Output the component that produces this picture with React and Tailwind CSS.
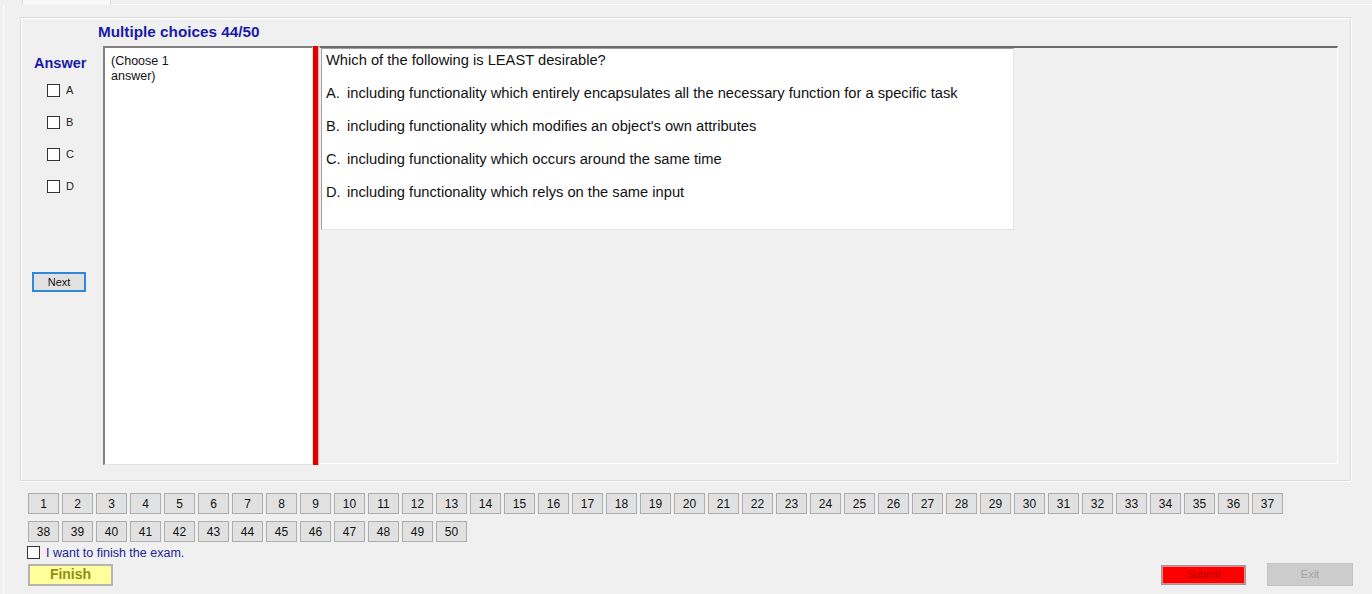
import React from 'react';

const options = [
  { key: 'A', text: 'including functionality which entirely encapsulates all the necessary function for a specific task' },
  { key: 'B', text: "including functionality which modifies an object's own attributes" },
  { key: 'C', text: 'including functionality which occurs around the same time' },
  { key: 'D', text: 'including functionality which relys on the same input' },
];

const numbers = Array.from({ length: 50 }, (_, i) => i + 1);

function Box() {
  return <span className="block w-[13px] h-[13px] bg-white border border-[#333333]" />;
}

function NumButton({ n }) {
  return (
    <div className="w-[31px] h-[21px] flex items-center justify-center bg-[#e1e1e1] border border-[#adadad] text-[12px] text-[#111]">
      {n}
    </div>
  );
}

export default function App() {
  return (
    <div className="w-[1372px] h-[594px] bg-[#f0f0f0] flex flex-col overflow-hidden font-['Liberation_Sans',Arial,sans-serif] text-black">
      {/* tab strip */}
      <div className="h-[5px] flex pl-[22px] shrink-0">
        <div className="w-[89px] h-full bg-[#f9f9f9] border-x border-[#d9d9d9]" />
        <div className="flex-1 border-b border-white" />
      </div>

      {/* tab page */}
      <div className="ml-[3px] w-[1350px] flex-1 border-l border-white pl-[16px] pt-[12px]">
        {/* group box */}
        <div className="w-[1331px] h-[464px] border border-[#dcdcdc] shadow-[inset_1px_1px_0_#fff,1px_1px_0_#fff] flex flex-col">
          <div className="h-[28px] pl-[77px] flex items-center pt-[1px]">
            <span className="text-[15.3px] font-bold text-[#1a1aa8]">Multiple choices 44/50</span>
          </div>

          <div className="flex h-[419px]">
            {/* answer column */}
            <div className="w-[82px] flex flex-col">
              <div className="mt-[9px] pl-[13px] h-[16px] leading-[16px] text-[14.5px] font-bold text-[#1a1aa8]">Answer</div>
              <div className="mt-[3px] flex flex-col">
                {options.map((o) => (
                  <div key={o.key} className="h-[32px] pl-[26px] flex items-center gap-[6px]">
                    <Box />
                    <span className="text-[11px] text-[#222]">{o.key}</span>
                  </div>
                ))}
              </div>
              <button className="mt-[70px] ml-[11px] w-[54px] h-[20px] bg-[#e1e1e1] border-2 border-[#2f88d8] text-[11px] text-[#111] flex items-center justify-center">
                Next
              </button>
            </div>

            {/* choose box */}
            <div className="w-[210px] h-[419px] bg-white border-t-2 border-l-2 border-[#828282] border-r border-b border-r-[#e3e3e3] border-b-[#e3e3e3] pl-[6px] pt-[6px] text-[12.5px] leading-[15px] text-[#111]">
              (Choose 1
              <br />
              answer)
            </div>

            {/* red divider */}
            <div className="w-[6px] h-[419px] bg-[#e00000] border-r border-[#f3b0b0]" />

            {/* question panel */}
            <div className="w-[1019px] h-[418px] border-t-2 border-t-[#6b6b6b] border-l border-l-[#e6e6e6] border-r border-b border-r-white border-b-white pl-[1px]">
              <div className="w-[693px] h-[182px] bg-white border-t border-l border-[#a0a0a0] border-r border-b border-r-[#e3e3e3] border-b-[#e3e3e3] pl-[4px] pt-[1px] text-[14.7px] text-[#111]">
                <div className="h-[20px] flex items-center">Which of the following is LEAST desirable?</div>
                <div className="mt-[7px] flex flex-col">
                  {options.map((o) => (
                    <div key={o.key} className="h-[33px] flex items-center">
                      <span className="w-[21px] shrink-0">{o.key}.</span>
                      <span>{o.text}</span>
                    </div>
                  ))}
                </div>
              </div>
            </div>
          </div>
        </div>

        {/* question navigator */}
        <div className="ml-[8px] mt-[12px] flex flex-col gap-[7px]">
          <div className="flex gap-[3px]">
            {numbers.slice(0, 37).map((n) => (
              <NumButton key={n} n={n} />
            ))}
          </div>
          <div className="flex gap-[3px]">
            {numbers.slice(37).map((n) => (
              <NumButton key={n} n={n} />
            ))}
          </div>
        </div>

        <div className="ml-[7px] mt-[2px] h-[16px] flex items-center gap-[6px]">
          <Box />
          <span className="text-[12.5px] text-[#22229a] pt-[2px]">I want to finish the exam.</span>
        </div>

        <div className="ml-[8px] mt-[3px] w-[1325px] flex items-center">
          <button className="w-[85px] h-[22px] bg-[#ffff9c] border-2 border-[#b4b4b4] text-[14px] font-bold text-[#8f8f14] flex items-center justify-center">
            Finish
          </button>
          <button className="ml-auto mr-[21px] w-[85px] h-[20px] bg-[#ff0000] border border-[#9a9a9a] shadow-[inset_0_0_0_1px_#e88] text-[11px] text-[#b30000] flex items-center justify-center">
            Submit
          </button>
          <button className="w-[86px] h-[23px] bg-[#cccccc] border border-[#c2c2c2] text-[11px] text-[#a3a3a3] flex items-center justify-center">
            Exit
          </button>
        </div>
      </div>
    </div>
  );
}
